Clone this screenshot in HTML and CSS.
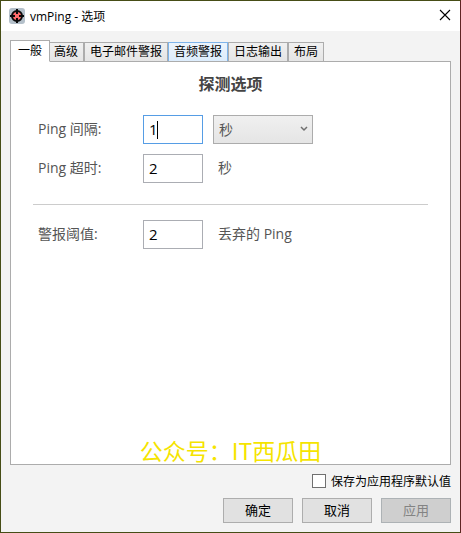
FILE: index.html
```html
<!DOCTYPE html>
<html lang="zh-CN">
<head>
    <meta charset="UTF-8">
    <meta name="viewport" content="width=device-width, initial-scale=1">
    <title>vmPing - 选项</title>
    <link rel="stylesheet" href="styles.css">
</head>
<body>
    <div class="window">
        <header class="titlebar">
            <svg class="app-icon" width="16" height="16" viewBox="0 0 16 16" aria-hidden="true">
                <rect width="16" height="16" rx="3" fill="#b4c0ca"/>
                <circle cx="8" cy="8" r="5" fill="#ff6b6b" stroke="#0b0b0b" stroke-width="2"/>
                <path d="M8 1v5M8 10v5M1 8h5M10 8h5" stroke="#0b0b0b" stroke-width="2"/>
            </svg>
            <h1 class="title">vmPing - 选项</h1>
            <button class="close" type="button" aria-label="关闭">
                <svg width="12" height="12" viewBox="0 0 12 12"><path d="M1 1l10 10M11 1L1 11" stroke="#000" stroke-width="1.1"/></svg>
            </button>
        </header>

        <form class="content">
            <div class="tabs" role="tablist">
                <button class="tab active" type="button" role="tab" aria-selected="true">一般</button>
                <button class="tab" type="button" role="tab">高级</button>
                <button class="tab" type="button" role="tab">电子邮件警报</button>
                <button class="tab hover" type="button" role="tab">音频警报</button>
                <button class="tab" type="button" role="tab">日志输出</button>
                <button class="tab" type="button" role="tab">布局</button>
            </div>

            <section class="panel" role="tabpanel">
                <h2 class="heading">探测选项</h2>
                <div class="row">
                    <label class="label" for="interval">Ping 间隔:</label>
                    <span class="field focused"><input class="number" type="text" id="interval" value="1"></span>
                    <span class="select-box">
                        <select class="unit" id="interval-unit" aria-label="间隔单位">
                            <option>秒</option>
                            <option>分钟</option>
                            <option>小时</option>
                        </select>
                        <svg class="arrow" width="8" height="6" viewBox="0 0 8 6" aria-hidden="true"><path d="M1 1l3 3 3-3" fill="none" stroke="#707070" stroke-width="1.5"/></svg>
                    </span>
                </div>
                <div class="row">
                    <label class="label" for="timeout">Ping 超时:</label>
                    <span class="field"><input class="number" type="text" id="timeout" value="2"></span>
                    <span class="suffix">秒</span>
                </div>
                <hr class="divider">
                <div class="row">
                    <label class="label" for="threshold">警报阈值:</label>
                    <span class="field"><input class="number" type="text" id="threshold" value="2"></span>
                    <span class="suffix">丢弃的 Ping</span>
                </div>
                <p class="watermark">公众号：IT西瓜田</p>
            </section>

            <label class="save-default">
                <input class="checkbox" type="checkbox">
                保存为应用程序默认值
            </label>

            <div class="actions">
                <button class="btn" type="button">确定</button>
                <button class="btn" type="button">取消</button>
                <button class="btn" type="button" disabled>应用</button>
            </div>
        </form>
    </div>
</body>
</html>
```

FILE: styles.css
```css
* {
    box-sizing: border-box;
}
body {
    margin: 0;
    font-family: "Open Sans", "Noto Sans CJK SC", sans-serif;
    font-size: 12px;
    color: #000;
}
button, input, select {
    font: inherit;
    color: inherit;
    margin: 0;
    border-radius: 0;
}
.window {
    display: flex;
    flex-direction: column;
    min-height: 100vh;
    background-color: #f3f3f3;
    border: 1px solid #464d16;
    border-right-color: #5e2424;
}
.titlebar {
    display: flex;
    align-items: center;
    height: 30px;
    padding: 0 9px 0 8px;
    background-color: #fff;
}
.title {
    flex: 1;
    margin: 0 0 0 5px;
    font-size: 12px;
    font-weight: normal;
}
.close {
    display: flex;
    padding: 0;
    margin-bottom: 2px;
    border: none;
    background: none;
}
.content {
    flex: 1;
    display: flex;
    flex-direction: column;
    padding: 9px;
}

/* 选项卡 */
.tabs {
    display: flex;
    align-items: flex-end;
    height: 22px;
    margin-bottom: -1px;
}
.tab {
    height: 20px;
    padding: 0 5px;
    line-height: 18px;
    white-space: nowrap;
    border: 1px solid #acacac;
    background: linear-gradient(#f0f0f0, #e5e5e5);
}
.tab.active {
    z-index: 1;
    height: 22px;
    margin-right: -2px;
    padding: 0 7px;
    line-height: 20px;
    border-bottom-color: #fff;
    background: #fff;
}
.tab.hover {
    border-color: #7eb4ea;
    border-bottom-color: #acacac;
    background: linear-gradient(#ecf4fc, #dcecfc);
}

.panel {
    flex: 1;
    display: flex;
    flex-direction: column;
    padding: 10px 22px 0;
    border: 1px solid #acacac;
    background-color: #fff;
    font-size: 14px;
    color: #555;
}
.heading {
    margin: 0 0 19px;
    font-size: 16px;
    line-height: 24px;
    font-weight: 600;
    text-align: center;
    color: #444;
}
.row {
    display: flex;
    align-items: center;
    height: 29px;
    margin-bottom: 10px;
    padding-left: 5px;
}
.label {
    width: 105px;
    padding-bottom: 3px;
}
.field {
    position: relative;
    width: 60px;
    height: 29px;
    margin-right: 10px;
}
.number {
    display: block;
    width: 100%;
    height: 100%;
    padding: 0 5px 2px;
    border: 1px solid #abadb3;
    background-color: #fff;
    font-size: 15px;
    color: #000;
    outline: none;
}
.focused .number {
    border-color: #569de5;
}
/* 光标 */
.focused::after {
    content: "";
    position: absolute;
    left: 14px;
    top: 6px;
    width: 1px;
    height: 18px;
    background-color: #000;
}
.select-box {
    position: relative;
    width: 100px;
    height: 29px;
}
.unit {
    width: 100%;
    height: 100%;
    padding: 0 5px;
    border: 1px solid #acacac;
    background: linear-gradient(#f0f0f0, #e5e5e5);
    appearance: none;
}
.arrow {
    position: absolute;
    right: 5px;
    top: 11px;
    pointer-events: none;
}
.suffix {
    margin-left: 5px;
    padding-bottom: 3px;
}
.divider {
    width: 100%;
    margin: 11px 0 15px;
    border: none;
    border-top: 1px solid #ccc;
}
.watermark {
    margin: auto 0 0;
    font-family: "Noto Sans CJK SC", sans-serif;
    font-size: 23px;
    line-height: 28px;
    text-align: center;
    color: #f5e400;
}

.save-default {
    display: flex;
    align-items: center;
    align-self: flex-end;
    height: 16px;
    margin: 8px 0 9px;
}
.checkbox {
    width: 14px;
    height: 14px;
    margin-right: 5px;
    border: 1px solid #707070;
    background-color: #fff;
    appearance: none;
}
.checkbox:checked {
    background-color: #707070;
}
.actions {
    display: flex;
    justify-content: flex-end;
    gap: 9px;
}
.btn {
    width: 70px;
    height: 25px;
    padding: 0 0 2px;
    border: 1px solid #adadad;
    background-color: #e1e1e1;
    font-size: 13px;
}
.btn:disabled {
    border-color: #adb2b5;
    background-color: #cfcfcf;
    color: #838383;
}
```
